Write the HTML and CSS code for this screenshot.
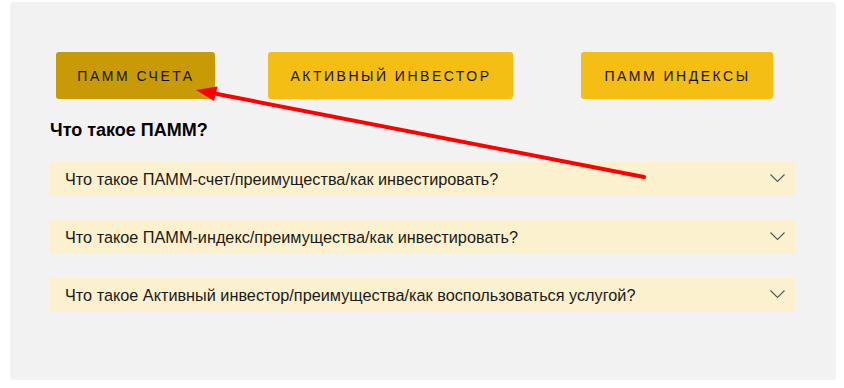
FILE: index.html
```
<!DOCTYPE html>
<html lang="ru">
<head>
<meta charset="utf-8">
<title>ПАММ</title>
<link rel="stylesheet" href="styles.css">
</head>
<body>
<div class="panel">
  <div class="tabs">
    <button class="tab tab-active">ПАММ СЧЕТА</button>
    <button class="tab tab-investor">АКТИВНЫЙ ИНВЕСТОР</button>
    <button class="tab tab-index">ПАММ ИНДЕКСЫ</button>
  </div>
  <h2 class="title">Что такое ПАММ?</h2>
  <div class="faq">
    <div class="faq-item"><span>Что такое ПАММ-счет/преимущества/как инвестировать?</span><svg class="chev" viewBox="0 0 15 8" width="15" height="8"><path d="M0.5 0.5 L7.5 7.5 L14.5 0.5" fill="none" stroke="#555" stroke-width="1.1"/></svg></div>
    <div class="faq-item"><span>Что такое ПАММ-индекс/преимущества/как инвестировать?</span><svg class="chev" viewBox="0 0 15 8" width="15" height="8"><path d="M0.5 0.5 L7.5 7.5 L14.5 0.5" fill="none" stroke="#555" stroke-width="1.1"/></svg></div>
    <div class="faq-item"><span>Что такое Активный инвестор/преимущества/как воспользоваться услугой?</span><svg class="chev" viewBox="0 0 15 8" width="15" height="8"><path d="M0.5 0.5 L7.5 7.5 L14.5 0.5" fill="none" stroke="#555" stroke-width="1.1"/></svg></div>
  </div>
</div>
<svg class="arrow" width="844" height="388" viewBox="0 0 844 388">
  <line x1="644" y1="177" x2="212" y2="93" stroke="#ff0000" stroke-width="4" stroke-linecap="round"/>
  <polygon points="196,90 214,101 217.5,86.5" fill="#ff0000"/>
</svg>
</body>
</html>
```
FILE: styles.css
```
html, body {
  margin: 0;
  padding: 0;
  background: #ffffff;
}
body {
  font-family: "Liberation Sans", Arial, sans-serif;
  color: #222;
  width: 844px;
  height: 388px;
  position: relative;
  overflow: hidden;
}
.panel {
  margin: 2px 0 0 10px;
  width: 826px;
  height: 378px;
  box-sizing: border-box;
  background: #f2f2f2;
  border-radius: 4px;
  padding: 50px 40px 0 40px;
}
.tabs {
  display: flex;
  padding-left: 6px;
}
.tab {
  height: 47px;
  border: none;
  border-radius: 3px;
  background: #f5be14;
  color: #111;
  font-family: "Liberation Sans", Arial, sans-serif;
  font-size: 14px;
  letter-spacing: 2.5px;
  padding: 0 18px 0 19px;
  cursor: pointer;
}
.tab-active {
  background: #c89a06;
  width: 159px;
}
.tab-investor {
  margin-left: 53px;
  width: 245px;
}
.tab-index {
  margin-left: 68px;
  width: 192px;
}
.title {
  margin: 20px 0 0 0;
  font-size: 18px;
  line-height: 22px;
  font-weight: bold;
  color: #000;
}
.faq {
  margin-top: 21px;
  display: flex;
  flex-direction: column;
  gap: 24px;
  width: 745px;
}
.faq-item {
  height: 34px;
  background: #fcf1cf;
  display: flex;
  align-items: center;
  justify-content: space-between;
  padding: 0 10px 0 15px;
  font-size: 16.25px;
  color: #1a1a1a;
}
.chev {
  display: block;
  margin-top: -2px;
}
.arrow {
  position: absolute;
  left: 0;
  top: 0;
  pointer-events: none;
}
```
